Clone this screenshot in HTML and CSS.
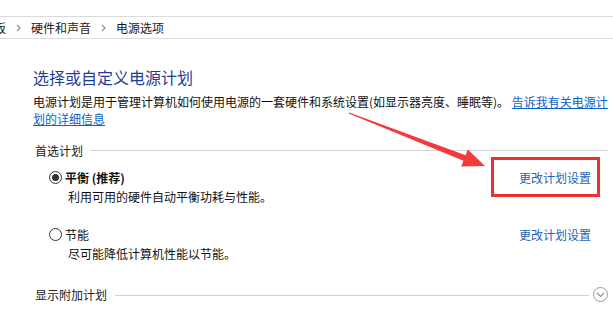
FILE: index.html
```html
<!DOCTYPE html>
<html lang="zh-CN">
<head>
<meta charset="utf-8">
<title>电源选项</title>
<link rel="stylesheet" href="styles.css">
</head>
<body>
<div class="screen">
  <nav class="crumbbar">
    <span class="crumb crumb-first">板</span>
    <svg class="chev" width="5" height="8" viewBox="0 0 5 8"><path d="M1 1 L4 4 L1 7" fill="none" stroke="#8a8a8a" stroke-width="1.1"/></svg>
    <span class="crumb">硬件和声音</span>
    <svg class="chev" width="5" height="8" viewBox="0 0 5 8"><path d="M1 1 L4 4 L1 7" fill="none" stroke="#8a8a8a" stroke-width="1.1"/></svg>
    <span class="crumb">电源选项</span>
  </nav>

  <main class="page">
    <h1 class="title">选择或自定义电源计划</h1>
    <p class="intro">电源计划是用于管理计算机如何使用电源的一套硬件和系统设置(如显示器亮度、睡眠等)。 <a href="#" class="link">告诉我有关电源计划的详细信息</a></p>

    <div class="group-head">
      <span class="group-label">首选计划</span>
      <span class="rule"></span>
    </div>

    <div class="plan plan-first">
      <div class="plan-row">
        <span class="radio checked"></span>
        <span class="plan-name bold">平衡 (推荐)</span>
        <a href="#" class="plan-link">更改计划设置</a>
      </div>
      <div class="plan-desc">利用可用的硬件自动平衡功耗与性能。</div>
    </div>

    <div class="plan plan-second">
      <div class="plan-row">
        <span class="radio"></span>
        <span class="plan-name">节能</span>
        <a href="#" class="plan-link">更改计划设置</a>
      </div>
      <div class="plan-desc">尽可能降低计算机性能以节能。</div>
    </div>

    <div class="group-head more">
      <span class="group-label">显示附加计划</span>
      <span class="rule"></span>
      <span class="expand">
        <svg width="9" height="6" viewBox="0 0 9 6"><path d="M1 1 L4.5 4.5 L8 1" fill="none" stroke="#8c8c8c" stroke-width="1.1"/></svg>
      </span>
    </div>
  </main>

  <div class="callout-box"></div>
  <svg class="arrow" width="613" height="315" viewBox="0 0 613 315">
    <polygon points="349.2,112.4 465.6,155.2 467.8,149.6 485,166 461.2,166.4 463.4,160.8 348.8,113.6" fill="#f23c3c"/>
  </svg>
</div>
</body>
</html>
```

FILE: styles.css
```css
* { box-sizing: border-box; }

html, body {
  margin: 0;
  padding: 0;
  background: #ffffff;
}

body {
  font-family: "Noto Sans CJK SC", "Noto Sans", sans-serif;
  font-size: 12px;
  color: #1a1a1a;
  overflow: hidden;
}

.screen {
  position: relative;
  width: 613px;
  height: 315px;
  overflow: hidden;
}

/* breadcrumb */
.crumbbar {
  margin-top: 16px;
  height: 23px;
  border-top: 1px solid #dadada;
  border-bottom: 1px solid #dadada;
  display: flex;
  align-items: center;
  white-space: nowrap;
  font-size: 12px;
  line-height: 17px;
  color: #1a1a1a;
}

.crumb-first {
  margin-left: -6px;
}

.chev {
  margin: 0 10px 0 10px;
  flex: none;
}

/* main content */
.page {
  padding: 0 5px 0 33px;
}

.title {
  margin: 28px 0 0 0;
  font-size: 16px;
  line-height: 20px;
  font-weight: normal;
  color: #1e3d98;
}

.intro {
  margin: 6px 0 0 0;
  font-size: 12px;
  line-height: 17px;
  color: #111111;
}

.link {
  color: #0a64c8;
  text-decoration: underline;
}

.group-head {
  margin-top: 15px;
  padding-left: 2px;
  height: 17px;
  display: flex;
  align-items: center;
  line-height: 17px;
}

.group-label {
  color: #222222;
  white-space: nowrap;
}

.rule {
  flex: 1;
  height: 1px;
  background: #d2d2d2;
  margin-left: 7px;
  margin-top: -1px;
}

.plan-first { margin-top: 10px; }
.plan-second { margin-top: 21px; }

.plan-row {
  display: flex;
  align-items: center;
  height: 17px;
  line-height: 17px;
  padding-left: 16px;
  padding-right: 17px;
}

.radio {
  width: 13px;
  height: 13px;
  border: 1px solid #333333;
  border-radius: 50%;
  flex: none;
  display: flex;
  align-items: center;
  justify-content: center;
  margin-right: 3px;
}

.radio.checked::after {
  content: "";
  width: 7px;
  height: 7px;
  border-radius: 50%;
  background: #333333;
}

.plan-name {
  color: #111111;
  flex: 1;
}

.bold { font-weight: bold; }

.plan-link {
  color: #1f63b8;
  text-decoration: none;
}

.plan-desc {
  margin-top: 2px;
  padding-left: 35px;
  line-height: 17px;
  color: #111111;
}

.group-head.more {
  margin-top: 24px;
}

.more .rule {
  margin-left: 8px;
  margin-top: 1px;
}

.expand {
  flex: none;
  width: 15px;
  height: 15px;
  margin-left: 4px;
  border: 1px solid #9a9a9a;
  border-radius: 50%;
  display: flex;
  align-items: center;
  justify-content: center;
  padding-top: 1px;
}

/* annotations */
.callout-box {
  position: absolute;
  left: 491px;
  top: 157px;
  width: 109px;
  height: 40px;
  border: 3px solid #ee3030;
}

.arrow {
  position: absolute;
  left: 0;
  top: 0;
  pointer-events: none;
}
```
